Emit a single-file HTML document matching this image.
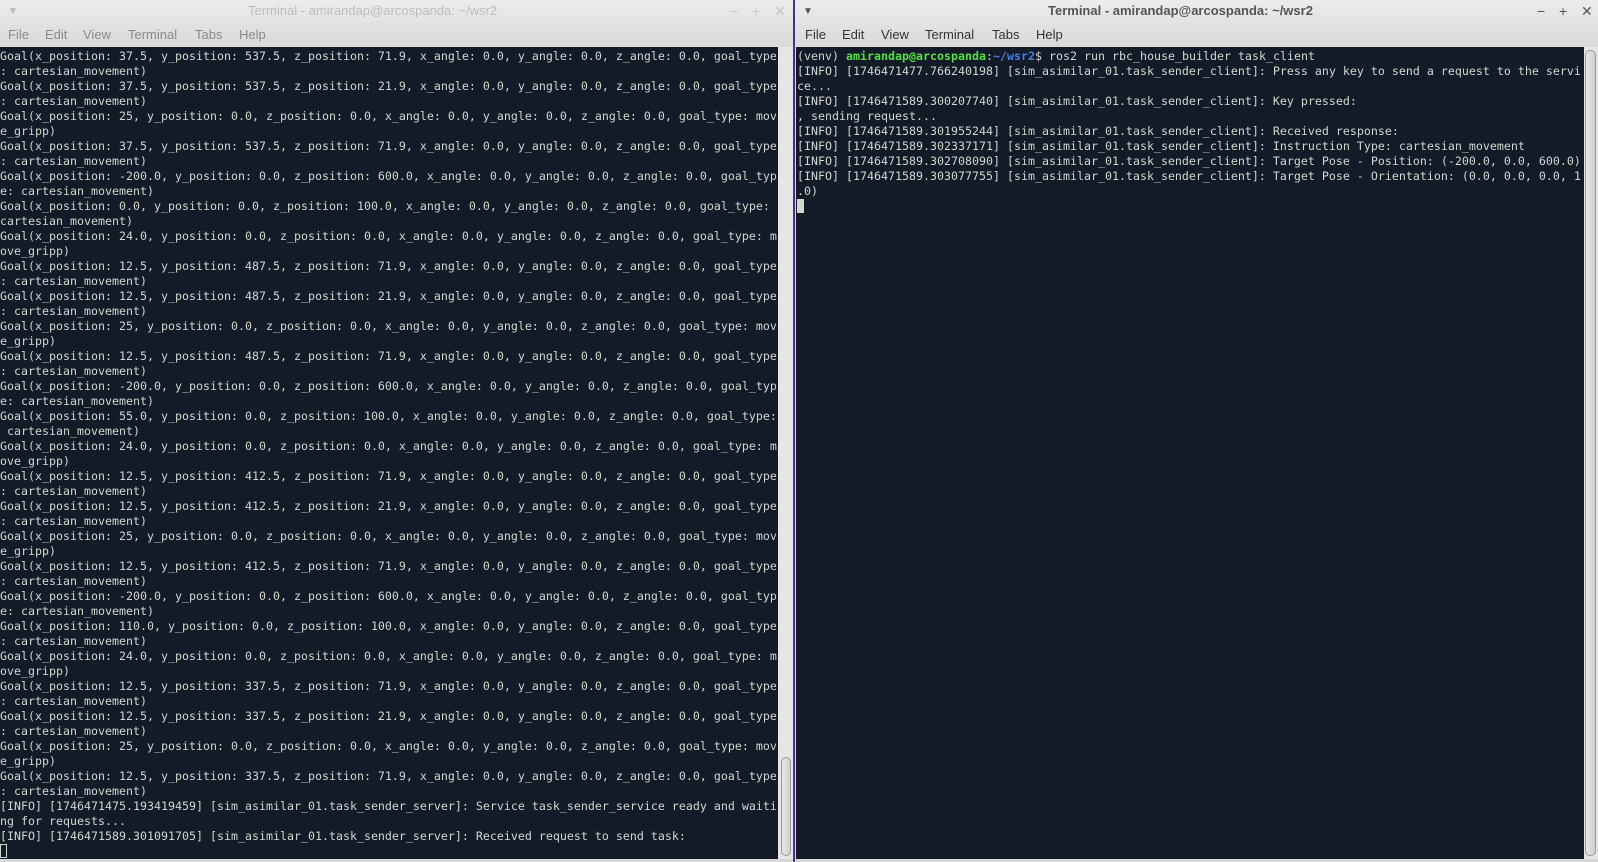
<!DOCTYPE html>
<html><head><meta charset="utf-8"><style>
*{margin:0;padding:0;box-sizing:border-box}
body{width:1598px;height:862px;overflow:hidden;background:#2a2550;position:relative;font-family:"Liberation Sans","DejaVu Sans",sans-serif}
.win{position:absolute;top:0;background:linear-gradient(#ececec,#d9d9d9 46px)}
.title{position:absolute;top:3px;font-size:13px;font-weight:bold;white-space:nowrap}
.menu{position:absolute;top:27px;font-size:13px;white-space:nowrap}
.menu span{position:absolute}
.term{position:absolute;top:47px;background:#131a28;overflow:hidden}
pre{font-family:"DejaVu Sans Mono","Liberation Mono",monospace;font-size:11.63px;line-height:15px;color:#d3d7cf;position:absolute;top:2px;left:0;white-space:pre}
.sb{position:absolute;background:#e6e6e6}
.thumb{position:absolute;border:1px solid #9a9a9a;border-radius:5px;background:linear-gradient(90deg,#e8e8e8,#cfcfcf)}
.g{color:#55e044;font-weight:bold}.b{color:#4a7de8;font-weight:bold}
.cur{display:inline-block;width:7px;height:14px;background:#d3d7cf;vertical-align:top}
.cur2{display:inline-block;width:7px;height:14px;border:1px solid #d3d7cf;vertical-align:top}
.btn{position:absolute;top:3px;font-size:14px}
</style></head><body>
<div class="win" style="left:0;width:794px;height:862px">
 <div style="position:absolute;left:8px;top:6px;color:#b8b8b8;font-size:10px">▼</div>
 <div class="title" style="left:248px;color:#bdbdbd;font-weight:normal;font-size:13px">Terminal - amirandap@arcospanda: ~/wsr2</div>
 <div class="btn" style="left:730px;color:#c8c8c8">−</div><div class="btn" style="left:752px;color:#c8c8c8">+</div><div class="btn" style="left:774px;color:#c8c8c8">✕</div>
 <div class="menu" style="color:#8a8a8a"><span style="left:8px">File</span><span style="left:45px">Edit</span><span style="left:83px">View</span><span style="left:128px">Terminal</span><span style="left:195px">Tabs</span><span style="left:239px">Help</span></div>
 <div class="term" style="left:0;width:778px;height:812px"><pre>Goal(x_position: 37.5, y_position: 537.5, z_position: 71.9, x_angle: 0.0, y_angle: 0.0, z_angle: 0.0, goal_type
: cartesian_movement)
Goal(x_position: 37.5, y_position: 537.5, z_position: 21.9, x_angle: 0.0, y_angle: 0.0, z_angle: 0.0, goal_type
: cartesian_movement)
Goal(x_position: 25, y_position: 0.0, z_position: 0.0, x_angle: 0.0, y_angle: 0.0, z_angle: 0.0, goal_type: mov
e_gripp)
Goal(x_position: 37.5, y_position: 537.5, z_position: 71.9, x_angle: 0.0, y_angle: 0.0, z_angle: 0.0, goal_type
: cartesian_movement)
Goal(x_position: -200.0, y_position: 0.0, z_position: 600.0, x_angle: 0.0, y_angle: 0.0, z_angle: 0.0, goal_typ
e: cartesian_movement)
Goal(x_position: 0.0, y_position: 0.0, z_position: 100.0, x_angle: 0.0, y_angle: 0.0, z_angle: 0.0, goal_type:
cartesian_movement)
Goal(x_position: 24.0, y_position: 0.0, z_position: 0.0, x_angle: 0.0, y_angle: 0.0, z_angle: 0.0, goal_type: m
ove_gripp)
Goal(x_position: 12.5, y_position: 487.5, z_position: 71.9, x_angle: 0.0, y_angle: 0.0, z_angle: 0.0, goal_type
: cartesian_movement)
Goal(x_position: 12.5, y_position: 487.5, z_position: 21.9, x_angle: 0.0, y_angle: 0.0, z_angle: 0.0, goal_type
: cartesian_movement)
Goal(x_position: 25, y_position: 0.0, z_position: 0.0, x_angle: 0.0, y_angle: 0.0, z_angle: 0.0, goal_type: mov
e_gripp)
Goal(x_position: 12.5, y_position: 487.5, z_position: 71.9, x_angle: 0.0, y_angle: 0.0, z_angle: 0.0, goal_type
: cartesian_movement)
Goal(x_position: -200.0, y_position: 0.0, z_position: 600.0, x_angle: 0.0, y_angle: 0.0, z_angle: 0.0, goal_typ
e: cartesian_movement)
Goal(x_position: 55.0, y_position: 0.0, z_position: 100.0, x_angle: 0.0, y_angle: 0.0, z_angle: 0.0, goal_type:
 cartesian_movement)
Goal(x_position: 24.0, y_position: 0.0, z_position: 0.0, x_angle: 0.0, y_angle: 0.0, z_angle: 0.0, goal_type: m
ove_gripp)
Goal(x_position: 12.5, y_position: 412.5, z_position: 71.9, x_angle: 0.0, y_angle: 0.0, z_angle: 0.0, goal_type
: cartesian_movement)
Goal(x_position: 12.5, y_position: 412.5, z_position: 21.9, x_angle: 0.0, y_angle: 0.0, z_angle: 0.0, goal_type
: cartesian_movement)
Goal(x_position: 25, y_position: 0.0, z_position: 0.0, x_angle: 0.0, y_angle: 0.0, z_angle: 0.0, goal_type: mov
e_gripp)
Goal(x_position: 12.5, y_position: 412.5, z_position: 71.9, x_angle: 0.0, y_angle: 0.0, z_angle: 0.0, goal_type
: cartesian_movement)
Goal(x_position: -200.0, y_position: 0.0, z_position: 600.0, x_angle: 0.0, y_angle: 0.0, z_angle: 0.0, goal_typ
e: cartesian_movement)
Goal(x_position: 110.0, y_position: 0.0, z_position: 100.0, x_angle: 0.0, y_angle: 0.0, z_angle: 0.0, goal_type
: cartesian_movement)
Goal(x_position: 24.0, y_position: 0.0, z_position: 0.0, x_angle: 0.0, y_angle: 0.0, z_angle: 0.0, goal_type: m
ove_gripp)
Goal(x_position: 12.5, y_position: 337.5, z_position: 71.9, x_angle: 0.0, y_angle: 0.0, z_angle: 0.0, goal_type
: cartesian_movement)
Goal(x_position: 12.5, y_position: 337.5, z_position: 21.9, x_angle: 0.0, y_angle: 0.0, z_angle: 0.0, goal_type
: cartesian_movement)
Goal(x_position: 25, y_position: 0.0, z_position: 0.0, x_angle: 0.0, y_angle: 0.0, z_angle: 0.0, goal_type: mov
e_gripp)
Goal(x_position: 12.5, y_position: 337.5, z_position: 71.9, x_angle: 0.0, y_angle: 0.0, z_angle: 0.0, goal_type
: cartesian_movement)
[INFO] [1746471475.193419459] [sim_asimilar_01.task_sender_server]: Service task_sender_service ready and waiti
ng for requests...
[INFO] [1746471589.301091705] [sim_asimilar_01.task_sender_server]: Received request to send task:
<span class="cur2"></span></pre></div>
 <div class="sb" style="left:778px;top:47px;width:16px;height:812px"><div class="thumb" style="left:3px;top:710px;width:10px;height:99px"></div></div>
</div>
<div style="position:absolute;left:793px;top:0;width:2px;height:862px;background:#4a2f8a"></div>
<div class="win" style="left:795px;width:803px;height:862px">
 <div style="position:absolute;left:8px;top:6px;color:#555;font-size:10px">▼</div>
 <div class="title" style="left:253px;color:#555">Terminal - amirandap@arcospanda: ~/wsr2</div>
 <div class="btn" style="left:742px;color:#555">−</div><div class="btn" style="left:764px;color:#555">+</div><div class="btn" style="left:786px;color:#555">✕</div>
 <div class="menu" style="color:#333"><span style="left:10px">File</span><span style="left:47px">Edit</span><span style="left:86px">View</span><span style="left:130px">Terminal</span><span style="left:197px">Tabs</span><span style="left:241px">Help</span></div>
 <div class="term" style="left:1px;width:788px;height:812px"><pre style="left:1px">(venv) <span class="g">amirandap@arcospanda</span>:<span class="b">~/wsr2</span>$ ros2 run rbc_house_builder task_client
[INFO] [1746471477.766240198] [sim_asimilar_01.task_sender_client]: Press any key to send a request to the servi
ce...
[INFO] [1746471589.300207740] [sim_asimilar_01.task_sender_client]: Key pressed:
, sending request...
[INFO] [1746471589.301955244] [sim_asimilar_01.task_sender_client]: Received response:
[INFO] [1746471589.302337171] [sim_asimilar_01.task_sender_client]: Instruction Type: cartesian_movement
[INFO] [1746471589.302708090] [sim_asimilar_01.task_sender_client]: Target Pose - Position: (-200.0, 0.0, 600.0)
[INFO] [1746471589.303077755] [sim_asimilar_01.task_sender_client]: Target Pose - Orientation: (0.0, 0.0, 0.0, 1
.0)
<span class="cur"></span></pre></div>
 <div class="sb" style="left:789px;top:47px;width:14px;height:812px"><div class="thumb" style="left:1px;top:3px;width:11px;height:806px"></div></div>
</div>
</body></html>
